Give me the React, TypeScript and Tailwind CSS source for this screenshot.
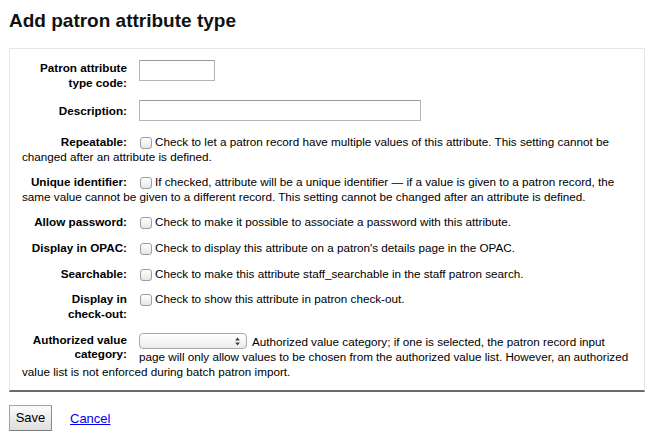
import type { ReactNode } from 'react';

// small mac-style checkbox drawn with css
const Checkbox = () => (
  <span className="ml-px mr-[3px] inline-block h-[12px] w-[12px] rounded-[3px] border border-[#9c9c9c] bg-linear-to-b from-white to-[#e6e6e6] align-middle" />
);

const Row = ({
  label,
  children,
  className = 'pb-[10px]',
  labelClass = '',
}: {
  label: ReactNode;
  children: ReactNode;
  className?: string;
  labelClass?: string;
}) => (
  <li className={`flow-root ${className}`}>
    <label className={`float-left mr-[12px] w-[105px] text-right font-bold ${labelClass}`}>{label}</label>
    {children}
  </li>
);

export default function App() {
  return (
    <div className="min-h-[441px] bg-white pl-[9px] pr-[7px] pt-[9px] font-['Liberation_Sans',Arial,sans-serif] text-[11.7px] leading-[15px] text-black">
      <h1 className="text-[19px] font-bold leading-[23px] text-[#111]">Add patron attribute type</h1>

      <fieldset className="mt-[16px] border border-[#e6e6e6] border-b-2 border-b-[#6b6b6b] pb-px pl-[12px] pr-[12px] pt-[11px]">
        <ul className="m-0 list-none p-0">
          <Row
            label={
              <>
                Patron attribute
                <br />
                type code:
              </>
            }
          >
            <span className="inline-block h-[21px] w-[76px] border border-[#b5b5b5] border-t-[#9a9a9a] bg-white align-top" />
          </Row>

          <Row label="Description:" className="pb-[13px]" labelClass="pt-[3px]">
            <span className="inline-block h-[21px] w-[282px] border border-[#b5b5b5] border-t-[#9a9a9a] bg-white align-top" />
          </Row>

          <Row label="Repeatable:">
            <Checkbox />
            Check to let a patron record have multiple values of this attribute. This setting cannot be changed after an
            attribute is defined.
          </Row>

          <Row label="Unique identifier:">
            <Checkbox />
            If checked, attribute will be a unique identifier — if a value is given to a patron record, the same value
            cannot be given to a different record. This setting cannot be changed after an attribute is defined.
          </Row>

          <Row label="Allow password:" className="pb-[11px]">
            <Checkbox />
            Check to make it possible to associate a password with this attribute.
          </Row>

          <Row label="Display in OPAC:" className="pb-[11px]">
            <Checkbox />
            Check to display this attribute on a patron's details page in the OPAC.
          </Row>

          <Row label="Searchable:">
            <Checkbox />
            Check to make this attribute staff_searchable in the staff patron search.
          </Row>

          <Row
            label={
              <>
                Display in
                <br />
                check-out:
              </>
            }
          >
            <Checkbox />
            Check to show this attribute in patron check-out.
          </Row>

          <Row
            label={
              <>
                Authorized value
                <br />
                category:
              </>
            }
            className="pb-[10px] pt-[2px]"
            labelClass="leading-[14px]"
          >
            <span className="relative mr-[5px] inline-block h-[16px] w-[108px] overflow-hidden rounded-[4px] border border-[#a9a9a9] bg-linear-to-b from-white to-[#ececec] align-[-3px]">
              <svg width="5" height="9" viewBox="0 0 5 9" className="absolute right-[6px] top-[3px]">
                <path d="M2.5 0.5 L4.8 3.6 L0.2 3.6 Z" fill="#3a3a3a" />
                <path d="M2.5 8.5 L4.8 5.4 L0.2 5.4 Z" fill="#3a3a3a" />
              </svg>
            </span>
            Authorized value category; if one is selected, the patron record input page will only allow values to be
            chosen from the authorized value list. However, an authorized value list is not enforced during batch patron
            import.
          </Row>
        </ul>
      </fieldset>

      <div className="mt-[13px] flex items-center gap-[18px]">
        <button className="h-[26px] w-[43px] border border-[#a3a3a3] border-b-[#7d7d7d] border-r-[#8a8a8a] bg-linear-to-b from-[#fbfbfb] to-[#dedede] text-[13px] leading-[24px] text-black">
          Save
        </button>
        <a href="#" className="text-[13px] text-[#0000ee] underline">
          Cancel
        </a>
      </div>
    </div>
  );
}
